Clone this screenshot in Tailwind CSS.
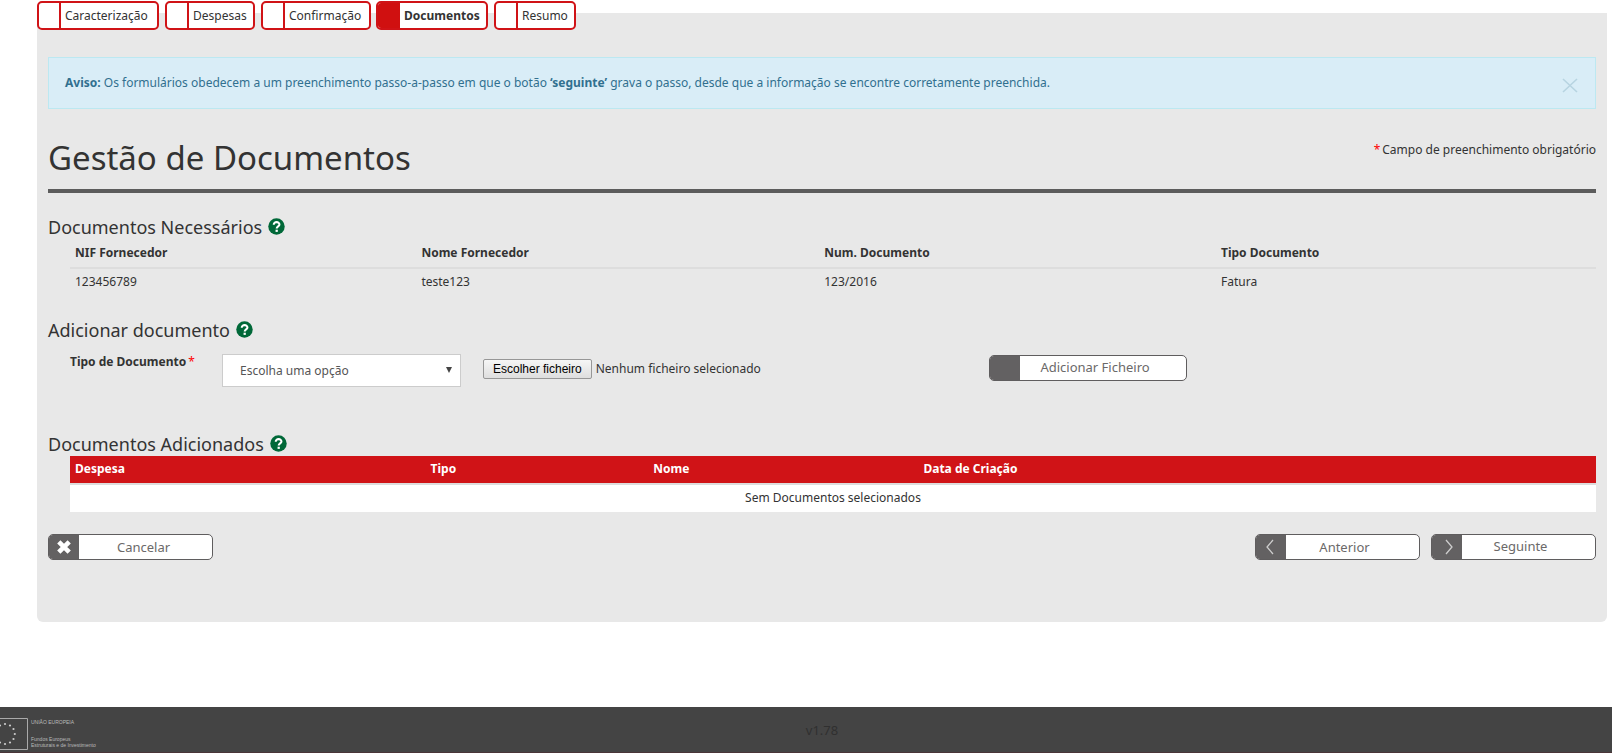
<!DOCTYPE html>
<html lang="pt">
<head>
<meta charset="utf-8">
<meta name="viewport" content="width=device-width, initial-scale=1">
<title>Gestão de Documentos</title>
<script src="https://cdn.jsdelivr.net/npm/@tailwindcss/browser@4"></script>
</head>
<body class="flex min-h-screen flex-col bg-white font-['Noto_Sans','Open_Sans',sans-serif] text-xs text-[#333]">
<svg class="hidden" aria-hidden="true">
  <symbol id="help" viewBox="0 0 18 18">
    <circle cx="9" cy="9" r="8.7" fill="#006838"/>
    <path d="M6.100 7.100C6 3.500 12.200 3.500 12.100 7C12 9 9.200 8.900 9.200 11.200" fill="none" stroke="#fff" stroke-width="2.200"/>
    <rect x="8" y="12.400" width="2.400" height="2.300" fill="#fff"/>
  </symbol>
</svg>
<main class="ml-[37px] mr-[5px] pt-px">
  <nav class="relative z-10 flex h-[29px]" aria-label="Passos">
    <a href="#" class="mr-1.5 flex w-[122px] overflow-hidden rounded-[5px] border-2 border-[#d01317] bg-white"><span class="w-[22px] border-r-2 border-[#d01317]"></span><span class="pl-1 leading-[25px]">Caracterização</span></a>
    <a href="#" class="mr-1.5 flex w-[90px] overflow-hidden rounded-[5px] border-2 border-[#d01317] bg-white"><span class="w-[22px] border-r-2 border-[#d01317]"></span><span class="pl-1 leading-[25px]">Despesas</span></a>
    <a href="#" class="mr-[5px] flex w-[110px] overflow-hidden rounded-[5px] border-2 border-[#d01317] bg-white"><span class="w-[22px] border-r-2 border-[#d01317]"></span><span class="pl-1 leading-[25px]">Confirmação</span></a>
    <a href="#" aria-current="step" class="mr-1.5 flex w-[112px] overflow-hidden rounded-[5px] border-2 border-[#d01317] bg-white font-bold"><span class="w-[22px] bg-[#d01010]"></span><span class="pl-1 leading-[25px]">Documentos</span></a>
    <a href="#" class="flex w-[82px] overflow-hidden rounded-[5px] border-2 border-[#d01317] bg-white"><span class="w-[22px] border-r-2 border-[#d01317]"></span><span class="pl-1 leading-[25px]">Resumo</span></a>
  </nav>

  <div class="-mt-[17px] rounded-b-md bg-[#e8e8e8] px-[11px] pt-11 pb-[62px]">
    <div role="alert" class="flex h-[52px] items-center justify-between border border-[#bce8f1] bg-[#d9edf7] pl-4 pr-[17px] text-[#31708f]">
      <p><strong>Aviso:</strong> Os formulários obedecem a um preenchimento passo-a-passo em que o botão <strong>‘seguinte’</strong> grava o passo, desde que a informação se encontre corretamente preenchida.</p>
      <button type="button" aria-label="Fechar" class="pt-1"><svg class="h-[15px] w-4" viewBox="0 0 16 15" fill="none" stroke="#b7d4e1" stroke-width="1.600"><path d="M1 1l14 13M15 1L1 14"/></svg></button>
    </div>

    <header class="flex h-[84px] items-start justify-between border-b-4 border-[#5c5c5c] pt-[26px]">
      <h1 class="text-[33px] leading-[46px]">Gestão de Documentos</h1>
      <p class="pt-[7px] leading-4"><span class="pr-0.5 text-[#f00]">*</span>Campo de preenchimento obrigatório</p>
    </header>

    <section class="pt-[21px]">
      <h2 class="flex h-[25px] items-center gap-1.5 text-lg">Documentos Necessários <svg class="size-[17px]"><use href="#help"/></svg></h2>
      <table class="ml-[22px] w-[calc(100%-22px)] table-fixed text-left leading-4">
        <colgroup><col class="w-[22.7%]"><col class="w-[26.4%]"><col class="w-[26%]"><col></colgroup>
        <thead><tr class="border-b-2 border-[#ddd]"><th class="px-[5px] py-1.5">NIF Fornecedor</th><th class="px-[5px] py-1.5">Nome Fornecedor</th><th class="px-[5px] py-1.5">Num. Documento</th><th class="px-[5px] py-1.5">Tipo Documento</th></tr></thead>
        <tbody><tr><td class="p-[5px]">123456789</td><td class="p-[5px]">teste123</td><td class="p-[5px]">123/2016</td><td class="p-[5px]">Fatura</td></tr></tbody>
      </table>
    </section>

    <section class="pt-[22px]">
      <h2 class="flex h-[25px] items-center gap-1.5 text-lg">Adicionar documento <svg class="size-[17px]"><use href="#help"/></svg></h2>
      <form class="flex h-[90px] items-start pt-3 pl-[22px]">
        <label for="tipo" class="w-[152px] leading-4 font-bold">Tipo de Documento<span class="pl-0.5 font-normal text-[#f00]">*</span></label>
        <div class="relative w-[239px]">
          <select id="tipo" class="h-[33px] w-full appearance-none border border-[#ccc] bg-white px-[17px] text-[#555]"><option>Escolha uma opção</option></select>
          <svg class="pointer-events-none absolute top-[13px] right-[9px] h-1.5 w-1.5" viewBox="0 0 7 7"><path d="M0 0h7L3.500 7z" fill="#444"/></svg>
        </div>
        <div class="relative ml-[22px] flex h-[29px] w-[506px] items-center gap-1">
          <input id="ficheiro" type="file" class="sr-only">
          <label for="ficheiro" class="rounded-xs border border-[#979797] bg-linear-to-b from-[#f6f6f6] to-[#dedede] px-[9px] font-['Liberation_Sans',sans-serif] leading-[18px] text-black">Escolher ficheiro</label>
          <span>Nenhum ficheiro selecionado</span>
        </div>
        <button type="button" class="mt-px flex h-[26px] w-[198px] overflow-hidden rounded-[5px] border border-[#5f5d5e] bg-white text-[13px] text-[#6b6969]"><span class="h-full w-[30px] bg-[#636162]"></span><span class="flex-1 pr-4 leading-[22px]">Adicionar Ficheiro</span></button>
      </form>
    </section>

    <section class="-mt-px">
      <h2 class="flex h-[25px] items-center gap-1.5 text-lg">Documentos Adicionados <svg class="size-[17px]"><use href="#help"/></svg></h2>
      <table class="ml-[22px] w-[calc(100%-22px)] table-fixed text-left leading-4">
        <colgroup><col class="w-[23.3%]"><col class="w-[14.6%]"><col class="w-[17.7%]"><col></colgroup>
        <thead><tr class="border-b-2 border-[#ddd] bg-[#d01317] text-white"><th class="px-[5px] pt-[5px] pb-1.5">Despesa</th><th class="px-[5px] pt-[5px] pb-1.5">Tipo</th><th class="px-[5px] pt-[5px] pb-1.5">Nome</th><th class="px-[5px] pt-[5px] pb-1.5">Data de Criação</th></tr></thead>
        <tbody><tr class="bg-white"><td colspan="4" class="px-[5px] pt-[5px] pb-1.5 text-center">Sem Documentos selecionados</td></tr></tbody>
      </table>
    </section>

    <div class="mt-[22px] flex gap-[11px] text-[13px] text-[#6b6969]">
      <button type="button" class="mr-auto flex h-[26px] w-[165px] overflow-hidden rounded-[5px] border border-[#5f5d5e] bg-white"><span class="grid h-full w-[30px] place-items-center bg-[#636162]"><svg class="size-[14px]" viewBox="0 0 14 14" fill="none" stroke="#fff" stroke-width="4.600"><path d="M1.800 1.800l10.400 10.400M12.200 1.800L1.800 12.200"/></svg></span><span class="flex-1 pr-1 leading-6">Cancelar</span></button>
      <button type="button" class="flex h-[26px] w-[165px] overflow-hidden rounded-[5px] border border-[#5f5d5e] bg-white"><span class="grid h-full w-[30px] place-items-center bg-[#636162] pr-0.5"><svg class="h-4 w-2" viewBox="0 0 8 16" fill="none" stroke="#ccc" stroke-width="1.300"><path d="M7 1L1 8l6 7"/></svg></span><span class="flex-1 pr-4 leading-6">Anterior</span></button>
      <button type="button" class="flex h-[26px] w-[165px] overflow-hidden rounded-[5px] border border-[#5f5d5e] bg-white"><span class="grid h-full w-[30px] place-items-center bg-[#636162] pl-1"><svg class="h-4 w-2" viewBox="0 0 8 16" fill="none" stroke="#ccc" stroke-width="1.300"><path d="M1 1l6 7-6 7"/></svg></span><span class="flex-1 pr-4 leading-[22px]">Seguinte</span></button>
    </div>
  </div>
</main>

<footer class="mt-auto grid h-[46px] grid-cols-3 items-start border-b border-[#4a3538] bg-[#444]">
  <div class="flex gap-[3px] pt-[11px]">
    <svg class="h-8 w-7" viewBox="0 0 28 32" role="img" aria-label="Bandeira da União Europeia">
      <path d="M0 .5H27.500V31.500H0" fill="none" stroke="#aaa"/>
      <g fill="#ccc"><circle cx="5" cy="6" r="1.100"/><circle cx="10" cy="7.500" r="1.100"/><circle cx="13.500" cy="11" r="1.100"/><circle cx="14.800" cy="16" r="1.100"/><circle cx="13.500" cy="21" r="1.100"/><circle cx="10" cy="24.500" r="1.100"/><circle cx="5" cy="26" r="1.100"/><circle cx="0" cy="24.500" r="1.100"/><circle cx="0" cy="7.500" r="1.100"/></g>
    </svg>
    <div class="font-['Liberation_Sans',sans-serif] text-[5px] leading-[6px] text-[#bbb]"><p class="pt-px">UNIÃO EUROPEIA</p><p class="pt-[11px]">Fundos Europeus</p><p>Estruturais e de Investimento</p></div>
  </div>
  <p class="pt-3.5 pl-8 text-center text-[13px] leading-[18px] text-[#303030]">v1.78</p>
</footer>
</body>
</html>
